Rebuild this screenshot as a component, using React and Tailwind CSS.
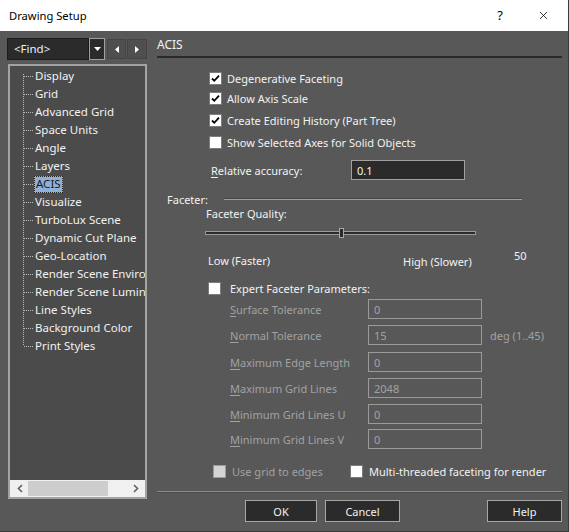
import { X } from 'lucide-react';

const treeItems = [
  'Display',
  'Grid',
  'Advanced Grid',
  'Space Units',
  'Angle',
  'Layers',
  'ACIS',
  'Visualize',
  'TurboLux Scene',
  'Dynamic Cut Plane',
  'Geo-Location',
  'Render Scene Environment',
  'Render Scene Luminance',
  'Line Styles',
  'Background Color',
  'Print Styles',
];

const expertRows = [
  { key: 'S', rest: 'urface Tolerance', value: '0', h: 'h-[26px]' },
  { key: 'N', rest: 'ormal Tolerance', value: '15', h: 'h-[27px]', unit: 'deg (1..45)' },
  { key: 'M', rest: 'aximum Edge Length', value: '0', h: 'h-[26px]' },
  { key: 'M', rest: 'aximum Grid Lines', value: '2048', h: 'h-[26px]' },
  { key: 'M', rest: 'inimum Grid Lines U', value: '0', h: 'h-[25px]' },
  { key: 'M', rest: 'inimum Grid Lines V', value: '0', h: 'h-[20px]' },
];

function Check({ checked, disabled }) {
  return (
    <span
      className={`flex w-[13px] h-[13px] shrink-0 items-center justify-center border ${
        disabled ? 'bg-[#d4d4d4] border-[#9a9a9a]' : 'bg-white border-[#7c7c7c]'
      }`}
    >
      {checked && (
        <svg width="9" height="9" viewBox="0 0 9 9">
          <path d="M1 4.5 L3.3 6.8 L8 1.6" stroke="#000" strokeWidth="1.8" fill="none" />
        </svg>
      )}
    </span>
  );
}

function CheckRow({ checked, label, className = '' }) {
  return (
    <div className={`flex items-center h-[20px] pl-[52px] ${className}`}>
      <Check checked={checked} />
      <span className="ml-[5px] text-[#f2f2f2]">{label}</span>
    </div>
  );
}

function Button({ children, className = '' }) {
  return (
    <div
      className={`flex h-[22px] items-center justify-center border border-[#a7a7a7] bg-[#2b2b2b] text-[#f2f2f2] ${className}`}
    >
      {children}
    </div>
  );
}

export default function App() {
  return (
    <div
      className="flex flex-col w-[569px] h-[532px] bg-[#585858] border-r border-b border-[#3a3a3a] text-[11px] leading-none whitespace-nowrap overflow-hidden"
      style={{ fontFamily: '"Noto Sans", "Open Sans", sans-serif' }}
    >
      {/* title bar */}
      <div className="flex items-center h-[31px] bg-white shrink-0 text-black">
        <span className="ml-[9px] text-[11.2px]">Drawing Setup</span>
        <span className="ml-auto mr-[34px] text-[13px]">?</span>
        <X className="w-[13px] h-[13px] mr-[18px]" strokeWidth={1.4} />
      </div>

      <div className="flex flex-1 min-h-0">
        {/* left column */}
        <div className="w-[157px] shrink-0 pl-[7px] pt-[7px]">
          <div className="flex h-[22px]">
            <div className="flex w-[82px] items-center border border-[#1c1c1c] bg-[#2b2b2b] pl-[6px] text-[11.5px] text-[#eaf2ff]">
              &lt;Find&gt;
            </div>
            <div className="flex w-[16px] items-center justify-center border border-[#a0a0a0] bg-[#2b2b2b]">
              <svg width="7" height="4" viewBox="0 0 7 4">
                <path d="M0 0 H7 L3.5 4 Z" fill="#fff" />
              </svg>
            </div>
            <div className="ml-[2px] mt-[1px] flex h-[20px] w-[19px] items-center justify-center border border-[#444] bg-[#4f4f4f]">
              <svg width="4" height="7" viewBox="0 0 4 7">
                <path d="M4 0 V7 L0 3.5 Z" fill="#fff" />
              </svg>
            </div>
            <div className="ml-[1px] mt-[1px] flex h-[20px] w-[20px] items-center justify-center border border-[#444] bg-[#4f4f4f]">
              <svg width="4" height="7" viewBox="0 0 4 7">
                <path d="M0 0 V7 L4 3.5 Z" fill="#fff" />
              </svg>
            </div>
          </div>

          <div className="mt-[4px] ml-[1px] flex h-[435px] w-[139px] flex-col border-2 border-[#a3a3a3] bg-[#4b4b4b]">
            <div className="relative flex-1 overflow-hidden pt-[1px] text-[11.5px]">
              <div className="absolute left-[13px] top-[8px] h-[271px] border-l border-dotted border-[#bdbdbd]" />
              {treeItems.map((item) => (
                <div key={item} className="flex h-[18px] items-center">
                  <span className="ml-[14px] w-[9px] shrink-0 border-t border-dotted border-[#bdbdbd]" />
                  {item === 'ACIS' ? (
                    <span className="ml-[1px] flex h-[17px] shrink-0 items-center border border-dotted border-[#222] bg-[#8fb1d9] px-[1px] text-[#1a1a1a]">
                      {item}
                    </span>
                  ) : (
                    <span className="ml-[2px] shrink-0 text-[#f2f2f2]">{item}</span>
                  )}
                </div>
              ))}
            </div>
            <div className="flex h-[17px] items-center bg-[#f0f0f0]">
              <svg className="ml-[7px]" width="6" height="9" viewBox="0 0 6 9">
                <path d="M5 1 L1.5 4.5 L5 8" stroke="#606060" strokeWidth="1.6" fill="none" />
              </svg>
              <div className="ml-[5px] h-[15px] w-[80px] bg-[#cdcdcd]" />
              <svg className="ml-auto mr-[6px]" width="6" height="9" viewBox="0 0 6 9">
                <path d="M1 1 L4.5 4.5 L1 8" stroke="#606060" strokeWidth="1.6" fill="none" />
              </svg>
            </div>
          </div>
        </div>

        {/* right column */}
        <div className="flex flex-1 flex-col pr-[6px]">
          <div className="mt-[8px] h-[17px] text-[12px] text-[#f2f2f2]">ACIS</div>
          <div className="h-[2px] bg-[#2a2a2a]" />

          <CheckRow checked label="Degenerative Faceting" className="mt-[10px]" />
          <CheckRow checked label="Allow Axis Scale" />
          <CheckRow checked label="Create Editing History (Part Tree)" className="mt-[2px]" />
          <CheckRow label="Show Selected Axes for Solid Objects" className="mt-[2px]" />

          <div className="mt-[8px] flex h-[20px] items-center pl-[54px]">
            <span className="w-[140px] text-[#f2f2f2]">
              <span className="underline underline-offset-2">R</span>elative accuracy:
            </span>
            <div className="flex h-[20px] w-[114px] items-center border border-[#a0a0a0] bg-[#2b2b2b] pl-[5px] text-[#f2f2f2]">
              0.1
            </div>
          </div>

          <div className="mt-[10px] flex h-[18px] items-center pl-[10px]">
            <span className="w-[57px] text-[#f2f2f2]">Faceter:</span>
            <div className="flex w-[298px] flex-col">
              <div className="h-[1px] bg-[#454545]" />
              <div className="h-[1px] bg-[#a0a0a0]" />
            </div>
          </div>

          <div className="-mt-[3px] flex h-[16px] items-center pl-[49px] text-[#f2f2f2]">Faceter Quality:</div>

          <div className="relative ml-[48px] mt-[7px] h-[10px] w-[271px]">
            <div className="absolute left-0 right-0 top-[3px] h-[4px] border border-[#9a9a9a] bg-[#2b2b2b]" />
            <div className="absolute left-[134px] top-0 h-[10px] w-[5px] border border-[#a8a8a8] bg-[#2b2b2b]" />
          </div>

          <div className="mt-[7px] flex h-[24px] pl-[51px] text-[#f2f2f2]">
            <span className="mt-[10px] w-[195px]">Low (Faster)</span>
            <span className="mt-[11px] w-[111px]">High (Slower)</span>
            <span className="mt-[5px]">50</span>
          </div>

          <div className="mt-[9px] flex h-[20px] items-center pl-[51px]">
            <Check />
            <span className="ml-[9px] text-[#f2f2f2]">Expert Faceter Parameters:</span>
          </div>

          <div className="mt-[1px] flex flex-col pl-[73px] text-[#a2a2a2]">
            {expertRows.map((row, i) => (
              <div key={i} className={`flex items-start ${row.h}`}>
                <span className="flex h-[20px] w-[138px] items-center">
                  <span>
                    <span className="underline underline-offset-2">{row.key}</span>
                    {row.rest}
                  </span>
                </span>
                <div className="flex h-[20px] w-[114px] items-center border border-[#9a9a9a] pl-[5px]">
                  {row.value}
                </div>
                {row.unit && <span className="ml-[8px] flex h-[20px] items-center">{row.unit}</span>}
              </div>
            ))}
          </div>

          <div className="mt-[12px] flex h-[20px] items-center pl-[56px]">
            <Check disabled />
            <span className="ml-[6px] w-[118px] text-[#a2a2a2]">Use grid to edges</span>
            <Check />
            <span className="ml-[6px] text-[#f2f2f2]">Multi-threaded faceting for render</span>
          </div>

          <div className="mt-[10px] flex flex-col">
            <div className="h-[1px] bg-[#8c8c8c]" />
            <div className="h-[1px] bg-[#4a4a4a]" />
          </div>

          <div className="mt-[7px] flex">
            <Button className="ml-[88px] w-[72px]">OK</Button>
            <Button className="ml-[8px] w-[75px]">Cancel</Button>
            <Button className="ml-auto w-[75px]">Help</Button>
          </div>
        </div>
      </div>
    </div>
  );
}
